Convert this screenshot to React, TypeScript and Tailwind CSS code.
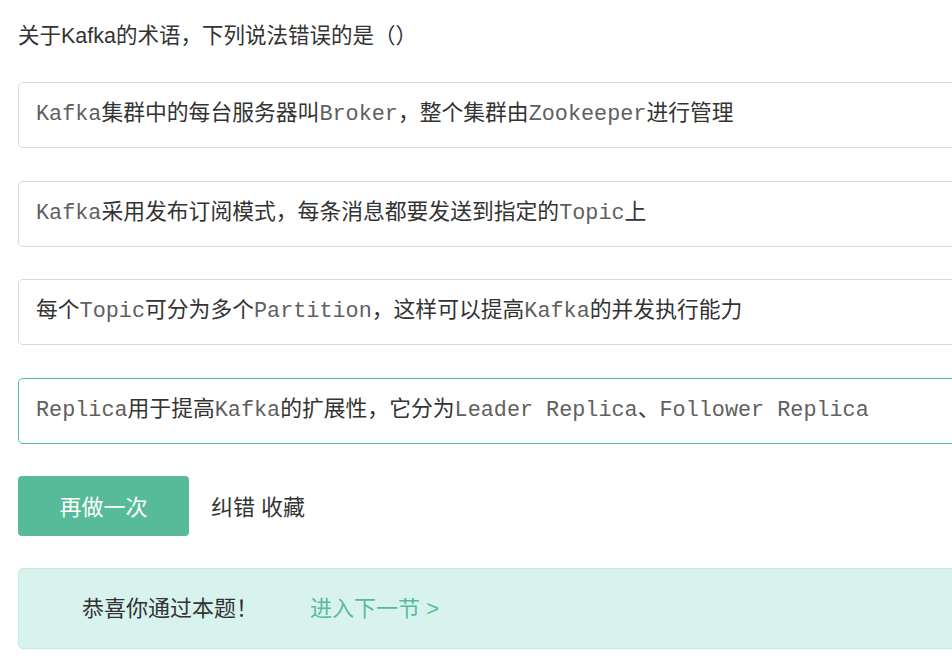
const cjk = 'font-["Liberation_Sans","Noto_Sans_CJK_SC",sans-serif]';
const mono = 'font-["Liberation_Mono","Noto_Sans_CJK_SC",monospace]';

type Part = string | { code: string };

interface OptionProps {
  parts: Part[];
  active?: boolean;
  className?: string;
}

function Option({ parts, active = false, className = '' }: OptionProps) {
  return (
    <div
      className={`w-[1000px] h-[66px] flex items-center pl-[17px] rounded-[5px] border ${
        active ? 'border-[#57bb9a]' : 'border-[#d9d9d9]'
      } ${className}`}
    >
      <div className={`${cjk} text-[21.8px] leading-[30px] text-[#333] whitespace-nowrap -mt-[2px]`}>
        {parts.map((p, i) =>
          typeof p === 'string' ? (
            <span key={i}>{p}</span>
          ) : (
            <span key={i} className={`${mono} text-[#606060]`}>
              {p.code}
            </span>
          )
        )}
      </div>
    </div>
  );
}

export default function App() {
  return (
    <div className="w-full overflow-hidden bg-white">
      <div className="pl-[18px] pt-[21px] pb-[15px]">
        <div className={`${cjk} text-[21.5px] leading-[30px] text-[#333] h-[30px]`}>
          关于Kafka的术语，下列说法错误的是（）
        </div>

        <Option
          className="mt-[31px]"
          parts={[{ code: 'Kafka' }, '集群中的每台服务器叫', { code: 'Broker' }, '，整个集群由', { code: 'Zookeeper' }, '进行管理']}
        />
        <Option
          className="mt-[33px]"
          parts={[{ code: 'Kafka' }, '采用发布订阅模式，每条消息都要发送到指定的', { code: 'Topic' }, '上']}
        />
        <Option
          className="mt-[32px]"
          parts={['每个', { code: 'Topic' }, '可分为多个', { code: 'Partition' }, '，这样可以提高', { code: 'Kafka' }, '的并发执行能力']}
        />
        <Option
          active
          className="mt-[33px]"
          parts={[
            { code: 'Replica' },
            '用于提高',
            { code: 'Kafka' },
            '的扩展性，它分为',
            { code: 'Leader Replica' },
            '、',
            { code: 'Follower Replica' },
          ]}
        />

        <div className="mt-[32px] flex items-center">
          <button
            className={`${cjk} w-[171px] h-[60px] rounded-[4px] bg-[#57bb9a] text-white text-[22px] leading-[30px] pt-[3px]`}
          >
            再做一次
          </button>
          <span className={`${cjk} ml-[22px] text-[22px] leading-[30px] text-[#333] pt-[3px]`}>纠错 收藏</span>
        </div>

        <div className="mt-[32px] w-[1000px] h-[81px] flex items-center pl-[63px] rounded-[5px] border border-[#c2ebe1] bg-[#d8f3ee]">
          <span className={`${cjk} text-[22px] leading-[30px] text-[#333]`}>恭喜你通过本题！</span>
          <span className={`${cjk} ml-[52px] text-[22px] leading-[30px] text-[#57bb9a]`}>进入下一节 &gt;</span>
        </div>
      </div>
    </div>
  );
}
